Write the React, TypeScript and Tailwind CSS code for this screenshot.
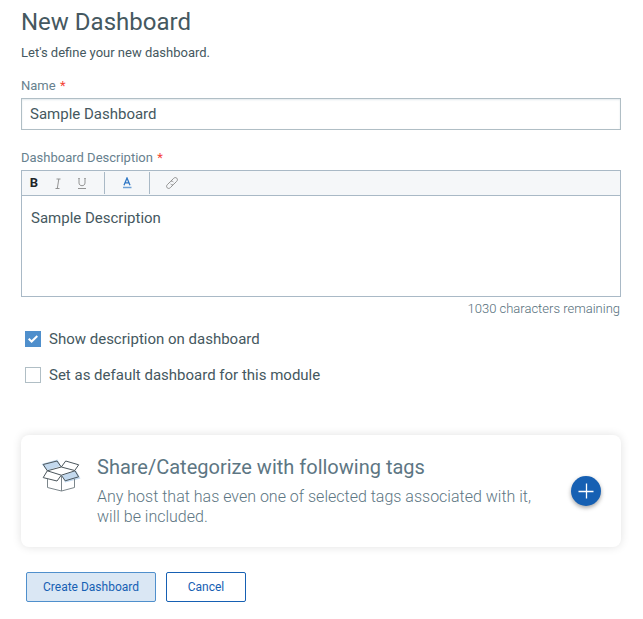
import { useState } from "react";

const BoxIcon = () => (
  <svg width="40" height="36" viewBox="0 0 40 36" fill="none">
    <path d="M0.500 5L16.500 0.500L20 7L6 11.500Z" fill="#c3d9ee" />
    <path d="M21 16.500L35 11.500L39.500 19.500L24 23.500Z" fill="#c3d9ee" />
    <g stroke="#4b565c" strokeWidth="1" strokeLinejoin="round">
      <path d="M2.200 5.500L16 2L20.300 8L6.300 11.800Z" />
      <path d="M20.300 8L24.700 2L37.700 5.800L33.700 11.500Z" />
      <path d="M6.300 11.800L20.300 16.200L16 22L2.200 18.600Z" />
      <path d="M20.300 16.200L34 11.800L37.600 17.800L24.200 21.800Z" />
    </g>
    <path d="M6.500 20V28.500L20.500 32L33.500 28.500V20M20.500 16.500V32" stroke="#7c868b" />
  </svg>
);

const LinkIcon = () => (
  <svg width="14" height="14" viewBox="0 0 14 14" fill="none" stroke="#888" strokeWidth="0.9" strokeLinecap="round">
    <path d="M5.800 5.200L8.700 2.300C9.600 1.400 10.900 1.300 11.800 2.200C12.700 3.100 12.600 4.400 11.700 5.300L8.800 8.200C8 9 6.700 9.100 5.900 8.300" />
    <path d="M8.200 8.800L5.300 11.700C4.400 12.600 3.100 12.700 2.200 11.800C1.300 10.900 1.400 9.600 2.300 8.700L5.200 5.800C6 5 7.300 4.900 8.100 5.700" />
  </svg>
);

const FieldLabel = ({ text }: { text: string }) => (
  <label className="block text-[13px] leading-4 text-[#67818e]">
    {text} <span className="ml-px text-[#f44336]">*</span>
  </label>
);

const Toolbar = () => (
  <div className="flex h-[25px] items-center border-b border-[#a9b9c6] bg-[#f5f7f9]">
    <button className="w-6 text-center text-[13px] leading-4 font-bold text-[#212529]">B</button>
    <button className="flex w-6 justify-center">
      <svg width="8" height="11" viewBox="0 0 8 11" fill="none" stroke="#888" strokeWidth="0.9">
        <path d="M2.500 1H6.500M1.500 10.500H5.500M4.800 1L3.300 10.500" />
      </svg>
    </button>
    <button className="flex w-6 justify-center">
      <svg width="10" height="11" viewBox="0 0 10 11" fill="none" stroke="#888" strokeWidth="0.9">
        <path d="M2 0V5C2 8.600 8 8.600 8 5V0M1 10.500H9" />
        <path d="M1 0.500H3M7 0.500H9" strokeWidth="0.5" />
      </svg>
    </button>
    <div className="ml-[10px] h-[22px] w-px bg-[#a9b9c6]" />
    <button className="flex w-11 justify-center">
      <svg width="10" height="12" viewBox="0 0 10 12" fill="none" stroke="#2f77c5">
        <path d="M2 8.200L5 1L8 8.200M3.200 5.800H6.800" strokeWidth="1.300" />
        <path d="M1 10.500H9.500" strokeWidth="1.500" stroke="#6da0d6" />
      </svg>
    </button>
    <div className="h-[22px] w-px bg-[#a9b9c6]" />
    <button className="ml-[15px]">
      <LinkIcon />
    </button>
  </div>
);

const CheckRow = ({ label, initial }: { label: string; initial: boolean }) => {
  const [checked, setChecked] = useState(initial);

  return (
    <button className="flex h-4 items-center gap-2" onClick={() => setChecked(!checked)}>
      <span
        className={`flex h-4 w-4 items-center justify-center border ${checked ? "border-[#4f8fcc] bg-[#4f8fcc]" : "border-[#b0bec5] bg-white"}`}
      >
        {checked && (
          <svg width="10" height="8" viewBox="0 0 10 8" fill="none" stroke="#fff" strokeWidth="2">
            <path d="M0.700 3.800L3.600 6.500L9.300 1" />
          </svg>
        )}
      </span>
      <span className="text-[15px] leading-4">{label}</span>
    </button>
  );
};

const App = () => {
  const [name, setName] = useState("Sample Dashboard");

  return (
    <main className="h-[619px] w-[643px] overflow-hidden bg-white pt-2 pr-[22px] pl-[21px] font-['Roboto',sans-serif] text-[#455860]">
      <h1 className="text-2xl leading-7">New Dashboard</h1>
      <p className="mt-[9px] text-[13px] leading-4">Let's define your new dashboard.</p>

      <div className="mt-[17px]">
        <FieldLabel text="Name" />
        <input
          value={name}
          onChange={(e) => setName(e.target.value)}
          className="mt-1 block h-8 w-full border border-[#b0bec5] px-2 text-[15px] shadow-[inset_0_1px_2px_#e1e8ec] outline-none"
        />
      </div>

      <div className="mt-5">
        <FieldLabel text="Dashboard Description" />
        <div className="mt-1 h-[127px] border border-[#a9b9c6]">
          <Toolbar />
          <div className="px-[9px] pt-3 text-[15px] leading-5">Sample Description</div>
        </div>
        <div className="mt-1 pr-px text-right text-[13px] leading-4 font-light text-[#546e7a]">1030 characters remaining</div>
      </div>

      <div className="mt-[14px] ml-1 flex flex-col gap-5">
        <CheckRow label="Show description on dashboard" initial={true} />
        <CheckRow label="Set as default dashboard for this module" initial={false} />
      </div>

      <section className="mt-[52px] flex h-28 items-start rounded-lg bg-white pl-5 shadow-[0_0_10px_rgba(0,0,0,0.12)]">
        <div className="mt-6 w-14">
          <BoxIcon />
        </div>
        <div className="mt-5 flex-1 text-[#5d7683]">
          <h2 className="text-xl leading-6">Share/Categorize with following tags</h2>
          <p className="mt-2 w-[450px] text-base leading-5 font-light">
            Any host that has even one of selected tags associated with it, will be included.
          </p>
        </div>
        <button className="mt-[41px] mr-5 flex h-[30px] w-[30px] items-center justify-center rounded-full bg-[#1660b3] shadow-[0_2px_4px_rgba(0,0,0,0.35)]">
          <svg width="16" height="16" viewBox="0 0 16 16" stroke="#fff" strokeWidth="1.3">
            <path d="M8.500 0.500V15.500M0.500 8.500H15.500" />
          </svg>
        </button>
      </section>

      <div className="mt-[25px] ml-[5px] flex gap-[10px] text-xs">
        <button className="h-[30px] w-[130px] rounded-[2px] border border-[#4f8fcc] bg-[#dae7f4] text-[#1660b3]">Create Dashboard</button>
        <button className="h-[30px] w-20 rounded-[2px] border border-[#1660b3] bg-white text-[#1660b3]">Cancel</button>
      </div>
    </main>
  );
};

export default App;
